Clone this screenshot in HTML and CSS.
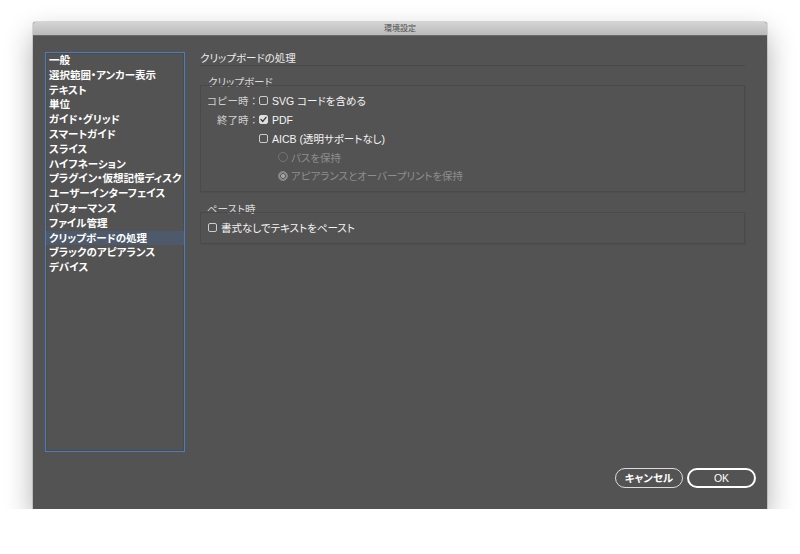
FILE: index.html
```html
<!DOCTYPE html>
<html lang="ja">
<head>
<meta charset="utf-8">
<title>環境設定</title>
<link rel="stylesheet" href="styles.css">
</head>
<body>
<div class="window">
  <div class="titlebar">環境設定</div>
  <div class="content">
    <div class="columns">
      <ul class="sidebar">
        <li>一般</li>
        <li>選択範囲・アンカー表示</li>
        <li>テキスト</li>
        <li>単位</li>
        <li>ガイド・グリッド</li>
        <li>スマートガイド</li>
        <li>スライス</li>
        <li>ハイフネーション</li>
        <li>プラグイン・仮想記憶ディスク</li>
        <li>ユーザーインターフェイス</li>
        <li>パフォーマンス</li>
        <li>ファイル管理</li>
        <li class="selected">クリップボードの処理</li>
        <li>ブラックのアピアランス</li>
        <li>デバイス</li>
      </ul>
      <div class="panel">
        <div class="panel-title">クリップボードの処理</div>

        <div class="group-label">クリップボード</div>
        <div class="group group-clip">
          <div class="row">
            <span class="row-label">コピー時：</span>
            <span class="check"></span>
            <span class="opt">SVG コードを含める</span>
          </div>
          <div class="row">
            <span class="row-label">終了時：</span>
            <span class="check checked"><svg viewBox="0 0 9 9" width="9" height="9"><path d="M2 4.6 L3.8 6.4 L7 2.4" fill="none" stroke="#3c3c3c" stroke-width="1.4" stroke-linecap="round" stroke-linejoin="round"/></svg></span>
            <span class="opt">PDF</span>
          </div>
          <div class="row">
            <span class="row-label"></span>
            <span class="check"></span>
            <span class="opt">AICB (透明サポートなし)</span>
          </div>
          <div class="row radio-row">
            <span class="radio"></span>
            <span class="opt disabled">パスを保持</span>
          </div>
          <div class="row radio-row">
            <span class="radio on"></span>
            <span class="opt disabled">アピアランスとオーバープリントを保持</span>
          </div>
        </div>

        <div class="group-label second">ペースト時</div>
        <div class="group group-paste">
          <div class="row paste-row">
            <span class="check"></span>
            <span class="opt">書式なしでテキストをペースト</span>
          </div>
        </div>
      </div>
    </div>
    <div class="footer">
      <button class="btn btn-cancel">キャンセル</button>
      <button class="btn btn-ok">OK</button>
    </div>
  </div>
</div>
</body>
</html>
```

FILE: styles.css
```css
* { box-sizing: border-box; }

body {
  margin: 0;
  background: #ffffff;
  font-family: "Liberation Sans", "Noto Sans CJK JP", sans-serif;
  font-size: 10.5px;
  color: #f2f2f2;
}

.window {
  margin: 22px 0 0 33px;
  width: 734px;
  height: 487px;
  background: #535353;
  display: flex;
  flex-direction: column;
  box-shadow: 0 12px 28px rgba(0, 0, 0, 0.32), 0 0 0 1px rgba(0, 0, 0, 0.12);
  border-radius: 3px 3px 0 0;
}

.titlebar {
  height: 14px;
  line-height: 13px;
  border-bottom: 1px solid #6a6a6a;
  background: linear-gradient(#d4d4d4, #bababa);
  border-radius: 3px 3px 0 0;
  text-align: center;
  font-size: 8px;
  color: #505050;
}

.content {
  flex: 1;
  display: flex;
  flex-direction: column;
  padding: 16px 11px 21px 12px;
}

.columns {
  display: flex;
  gap: 15px;
  height: 400px;
}

.sidebar {
  flex: 0 0 140px;
  min-width: 0;
  margin: 0;
  padding: 0;
  list-style: none;
  border: 1px solid #4b7dc4;
  box-shadow: inset 0 0 0 1px rgba(60, 50, 40, 0.25);
  overflow: hidden;
}

.sidebar li {
  height: 14.8px;
  line-height: 14.8px;
  padding-left: 3px;
  font-weight: bold;
  color: #ffffff;
  white-space: nowrap;
  font-feature-settings: "palt";
}

.sidebar li.selected {
  background: #4e5a6b;
}

.panel {
  flex: 0 0 545px;
  min-width: 0;
  display: flex;
  flex-direction: column;
}

.panel-title {
  height: 14px;
  line-height: 12px;
  border-bottom: 1px solid #4a4a4a;
  color: #ececec;
  font-feature-settings: "palt";
}

.group-label {
  margin-top: 10px;
  height: 12px;
  line-height: 12px;
  padding-left: 8px;
  color: #dadada;
  font-feature-settings: "palt";
}

.group-label.second {
  margin-top: 11px;
  padding-left: 7px;
}

.group {
  margin-top: -3px;
  border: 1px solid #4a4a4a;
  box-shadow: 1px 1px 0 rgba(0, 0, 0, 0.06);
}

.group-clip {
  height: 107px;
  padding-top: 5.6px;
}

.group-paste {
  height: 32px;
  padding-top: 5.6px;
}

.row {
  height: 18.75px;
  display: flex;
  align-items: center;
  white-space: nowrap;
}

.row-label {
  width: 58px;
  flex: 0 0 58px;
  text-align: right;
  color: #d0d0d0;
}

.opt {
  margin-left: 4px;
  color: #f4f4f4;
  font-feature-settings: "palt";
}

.opt.disabled {
  margin-left: 3px;
  color: #8e8e8e;
}

.check {
  width: 9px;
  height: 9px;
  border: 1px solid #cdcdcd;
  border-radius: 2px;
  display: inline-block;
  flex: 0 0 9px;
  position: relative;
}

.check.checked {
  background: #dedede;
  border-color: #dedede;
}

.check.checked svg {
  position: absolute;
  left: -1px;
  top: -1px;
}

.radio-row {
  padding-left: 77px;
}

.radio {
  width: 10px;
  height: 10px;
  flex: 0 0 10px;
  border-radius: 50%;
  border: 1px solid #747474;
}

.radio.on {
  background: radial-gradient(circle, #a2a2a2 0 1.8px, #5a5a5a 2.2px 2.6px, #8a8a8a 3px);
  border-color: #8a8a8a;
}

.paste-row {
  padding-left: 7px;
}

.footer {
  margin-top: 16px;
  display: flex;
  justify-content: flex-end;
  gap: 4px;
}

.btn {
  height: 20px;
  border-radius: 10px;
  background: transparent;
  color: #ffffff;
  font-family: "Liberation Sans", "Noto Sans CJK JP", sans-serif;
  font-size: 10.5px;
  font-weight: bold;
  padding: 0;
  line-height: 16px;
  font-feature-settings: "palt";
}

.btn-cancel {
  width: 68px;
  border: 1.5px solid #dcdcdc;
}

.btn-ok {
  width: 69px;
  border: 2px solid #ffffff;
  font-weight: normal;
}
```
